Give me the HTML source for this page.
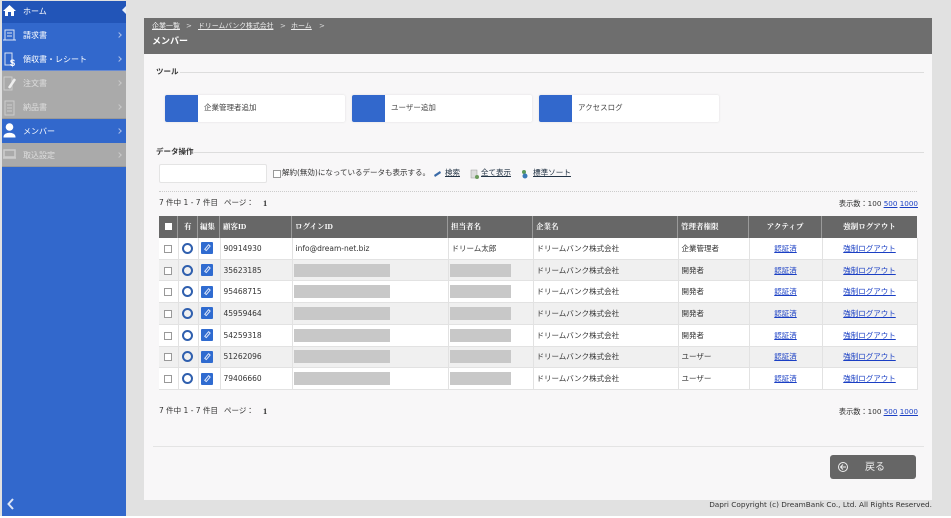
<!DOCTYPE html>
<html lang="ja"><head><meta charset="utf-8">
<style>
html,body{margin:0;padding:0;width:951px;height:518px;overflow:hidden;background:#fff}
body{position:relative;font-family:"DejaVu Sans","Noto Sans CJK JP",sans-serif;font-size:7.5px;color:#333}
.a{position:absolute;white-space:nowrap}
a{color:#1a3fc4}
.side{left:2px;width:124px}
.lbl{left:23px;color:#fff;font-size:8px;line-height:12px;margin-top:1px}
.chev{left:117px;width:3px;height:3px;border-top:1px solid #a9bde6;border-right:1px solid #a9bde6;transform:rotate(45deg)}
.chev.g{border-color:#c8c8c8}
.th{background:#676767;color:#fff;font-family:"Liberation Serif","Noto Serif CJK SC",serif;font-weight:bold;font-size:7.5px;line-height:22px;height:22px;top:216px;box-sizing:border-box;border-right:1px solid #9a9a9a;padding-left:3px}
.btn{background:#fff;height:27px;top:95px;border-radius:2px;box-shadow:0 0 2px #ddd}
.btn i{position:absolute;left:0;top:0;width:33px;height:27px;background:#3268cc;border-radius:2px 0 0 2px}
.btn span{position:absolute;left:39px;top:7px;font-size:7.5px;line-height:12px;color:#444}
.hr{background:#ddd;height:1px}
td{padding:0 0 0 3px;border:1px solid #e2e2e2;border-width:0 1px 1px 0;height:20.7px;white-space:nowrap;overflow:hidden}
tr{background:#fff}tr.o{background:#f0f0f0}
.c{text-align:center;padding:0}
.cb{display:inline-block;width:6px;height:6px;border:1px solid #999;background:#fff;vertical-align:middle}
.r{display:inline-block;width:7px;height:7px;border:2.5px solid #2f5fae;border-radius:50%;vertical-align:middle;background:transparent;margin-right:1px}
.e{display:inline-block;width:12px;height:12px;background:#2f6bd0;border-radius:1px;vertical-align:middle;position:relative;margin-right:4px}
.e:after{content:"";position:absolute;left:5px;top:2px;width:2.5px;height:7px;border:1px solid #dfe8fa;box-sizing:border-box;transform:rotate(40deg)}
td a{color:#1a3fc4}
.m{display:block;height:13px;background:#c8c8c8;margin-left:-2px}
</style></head><body>
<div class="a" style="left:0;top:0;width:951px;height:516px;background:#e1e1e1"></div>
<!-- sidebar -->
<div class="a side" style="top:1px;height:515px;background:#3268cc"></div>
<div class="a side" style="top:1px;height:22px;background:#2255b8"></div>
<div class="a side" style="top:71px;height:48px;background:#aaa"></div>
<div class="a side" style="top:143px;height:24px;background:#aaa"></div>
<div class="a side" style="top:70px;height:1px;background:#6a8cd2"></div>
<div class="a side" style="top:118px;height:1px;background:#999"></div>
<div class="a side" style="top:166px;height:1px;background:#999"></div>
<svg class="a" style="left:0;top:0" width="40" height="518" viewBox="0 0 40 518">
<path d="M3 11L9.500 5L16 11L14 11L14 16L11 16L11 12L8 12L8 16L5 16L5 11Z" fill="#fff"/>
<rect x="5" y="30" width="9" height="10" fill="none" stroke="#dce4f5" stroke-width="1"/><path d="M7 33H12M7 36H12M3 40H16" stroke="#dce4f5" stroke-width="1"/>
<path d="M5 53H12V65H5Z" fill="none" stroke="#dce4f5"/><text x="10" y="66" font-size="9" font-weight="bold" fill="#fff" font-family="Liberation Sans">$</text>
<path d="M4 77H12V90H4Z" fill="none" stroke="#ccc"/><path d="M9 88L15 79" stroke="#eee" stroke-width="2.500"/>
<path d="M5 101H14V115H5Z M7 105H12M7 108H12M7 111H12" fill="none" stroke="#ccc"/>
<circle cx="9.500" cy="127" r="3.800" fill="#fff"/><path d="M4 137C4 132 15 132 15 137Z" fill="#fff" stroke="#fff"/>
<path d="M4 150H15V157H4Z M3 158H16" fill="none" stroke="#ccc" stroke-width="1.500"/>
<path d="M13 499L8.500 504L13 509" fill="none" stroke="#dfe6f5" stroke-width="2"/>
</svg>
<div class="a" style="left:122px;top:6px;width:0;height:0;border:4px solid transparent;border-right:4px solid #e8eef8;border-left:0"></div>
<div class="a lbl" style="top:5px">ホーム</div>
<div class="a lbl" style="top:29px">請求書</div>
<div class="a lbl" style="top:53px">領収書・レシート</div>
<div class="a lbl" style="top:77px;color:#ddd">注文書</div>
<div class="a lbl" style="top:101px;color:#ddd">納品書</div>
<div class="a lbl" style="top:125px">メンバー</div>
<div class="a lbl" style="top:149px;color:#ddd">取込設定</div>
<div class="a chev" style="top:33px"></div><div class="a chev" style="top:57px"></div><div class="a chev g" style="top:81px"></div><div class="a chev g" style="top:105px"></div><div class="a chev" style="top:129px"></div><div class="a chev g" style="top:153px"></div>
<!-- panel -->
<div class="a" style="left:144px;top:18px;width:788px;height:482px;background:#f8f7f8"></div>
<div class="a" style="left:144px;top:18px;width:788px;height:36px;background:#6e6e6e"></div>
<div class="a" style="left:152px;top:20px;color:#eee;font-size:7px;line-height:12px"><u>企業一覧</u></div>
<div class="a" style="left:186px;top:20px;color:#ddd;font-size:7px;line-height:12px">&gt;</div>
<div class="a" style="left:198px;top:20px;color:#eee;font-size:6.85px;line-height:12px"><u>ドリームバンク株式会社</u></div>
<div class="a" style="left:280px;top:20px;color:#ddd;font-size:7px;line-height:12px">&gt;</div>
<div class="a" style="left:291px;top:20px;color:#eee;font-size:7px;line-height:12px"><u>ホーム</u></div>
<div class="a" style="left:319px;top:20px;color:#ddd;font-size:7px;line-height:12px">&gt;</div>
<div class="a" style="left:152px;top:35px;color:#fff;font-size:9px;font-weight:bold;line-height:14px">メンバー</div>
<div class="a" style="left:156px;top:66px;font-size:7.5px;font-weight:bold;line-height:12px;color:#333">ツール</div>
<div class="a hr" style="left:180px;top:72px;width:744px"></div>
<div class="a btn" style="left:165px;width:180px"><i></i><span>企業管理者追加</span></div>
<div class="a btn" style="left:352px;width:180px"><i></i><span>ユーザー追加</span></div>
<div class="a btn" style="left:539px;width:180px"><i></i><span>アクセスログ</span></div>
<div class="a" style="left:156px;top:146px;font-size:7.5px;font-weight:bold;line-height:12px;color:#333">データ操作</div>
<div class="a hr" style="left:194px;top:152px;width:730px"></div>
<div class="a" style="left:159px;top:164px;width:108px;height:19px;background:#fff;border:1px solid #e4e4e4;border-radius:2px;box-sizing:border-box"></div>
<div class="a" style="left:273px;top:170px;width:6px;height:6px;background:#fff;border:1px solid #999"></div>
<div class="a" style="left:282px;top:167px;font-size:7.5px;line-height:12px">解約(無効)になっているデータも表示する。</div>
<svg class="a" style="left:432px;top:168px" width="100" height="12"><path d="M2 7L8 3L9 5L3 9Z" fill="#3a6aa8"/><rect x="39" y="2" width="6" height="8" fill="#ddd" stroke="#999" stroke-width=".5"/><circle cx="45" cy="9" r="2" fill="#6a9a5a"/><circle cx="92" cy="4" r="2" fill="#5a9a5a"/><circle cx="93" cy="8" r="2.500" fill="#3a7ab8"/></svg>
<div class="a" style="left:445px;top:167px;font-size:7.5px;line-height:12px;color:#234"><u>検索</u></div>
<div class="a" style="left:481px;top:167px;font-size:7.5px;line-height:12px;color:#234"><u>全て表示</u></div>
<div class="a" style="left:533px;top:167px;font-size:7.6px;line-height:12px;color:#234"><u>標準ソート</u></div>
<div class="a" style="left:159px;top:191px;width:758px;border-top:1px dotted #ccc"></div>
<div class="a" style="left:159px;top:197px;font-size:7.5px;line-height:12px">7 件中 1 - 7 件目</div>
<div class="a" style="left:224px;top:197px;font-size:7.5px;line-height:12px">ページ：</div>
<div class="a" style="left:263px;top:197px;font:bold 8.5px/12px 'Liberation Serif',serif">1</div>
<div class="a" style="right:33px;top:198px;font-size:7.2px;line-height:12px">表示数：100 <a href="#"><u>500</u></a> <a href="#"><u>1000</u></a></div>
<div class="a" style="left:159px;top:405px;font-size:7.5px;line-height:12px">7 件中 1 - 7 件目</div>
<div class="a" style="left:224px;top:405px;font-size:7.5px;line-height:12px">ページ：</div>
<div class="a" style="left:263px;top:405px;font:bold 8.5px/12px 'Liberation Serif',serif">1</div>
<div class="a" style="right:33px;top:406px;font-size:7.2px;line-height:12px">表示数：100 <a href="#"><u>500</u></a> <a href="#"><u>1000</u></a></div>
<!-- table -->
<div class="a th" style="left:159px;width:19px"></div>
<div class="a" style="left:165px;top:223px;width:7px;height:7px;background:#fff"></div>
<div class="a th" style="left:178px;width:20px;padding-left:6px">有</div>
<div class="a th" style="left:198px;width:22px;padding-left:2px">編集</div>
<div class="a th" style="left:220px;width:72px">顧客ID</div>
<div class="a th" style="left:292px;width:156px">ログインID</div>
<div class="a th" style="left:448px;width:85px">担当者名</div>
<div class="a th" style="left:533px;width:145px">企業名</div>
<div class="a th" style="left:678px;width:71px">管理者権限</div>
<div class="a th" style="left:749px;width:73px;padding:0;text-align:center">アクティブ</div>
<div class="a th" style="left:822px;width:95px;padding:0;text-align:center;border:0">強制ログアウト</div>
<table class="a" style="left:159px;top:238px;width:758px;height:152px;border-collapse:collapse;table-layout:fixed;font-size:7.5px;color:#333">
<colgroup><col style="width:19px"><col style="width:20px"><col style="width:22px"><col style="width:72px"><col style="width:156px"><col style="width:85px"><col style="width:145px"><col style="width:71px"><col style="width:73px"><col style="width:95px"></colgroup>
<tr><td class="c"><span class="cb"></span></td><td class="c"><span class="r"></span></td><td class="c"><span class="e"></span></td><td>90914930</td><td>info@dream-net.biz</td><td>ドリーム太郎</td><td>ドリームバンク株式会社</td><td>企業管理者</td><td class="c"><a href="#">認証済</a></td><td class="c"><a href="#">強制ログアウト</a></td></tr>
<tr class="o"><td class="c"><span class="cb"></span></td><td class="c"><span class="r"></span></td><td class="c"><span class="e"></span></td><td>35623185</td><td><span class="m" style="width:96px"></span></td><td><span class="m" style="width:61px"></span></td><td>ドリームバンク株式会社</td><td>開発者</td><td class="c"><a href="#">認証済</a></td><td class="c"><a href="#">強制ログアウト</a></td></tr>
<tr><td class="c"><span class="cb"></span></td><td class="c"><span class="r"></span></td><td class="c"><span class="e"></span></td><td>95468715</td><td><span class="m" style="width:96px"></span></td><td><span class="m" style="width:61px"></span></td><td>ドリームバンク株式会社</td><td>開発者</td><td class="c"><a href="#">認証済</a></td><td class="c"><a href="#">強制ログアウト</a></td></tr>
<tr class="o"><td class="c"><span class="cb"></span></td><td class="c"><span class="r"></span></td><td class="c"><span class="e"></span></td><td>45959464</td><td><span class="m" style="width:96px"></span></td><td><span class="m" style="width:61px"></span></td><td>ドリームバンク株式会社</td><td>開発者</td><td class="c"><a href="#">認証済</a></td><td class="c"><a href="#">強制ログアウト</a></td></tr>
<tr><td class="c"><span class="cb"></span></td><td class="c"><span class="r"></span></td><td class="c"><span class="e"></span></td><td>54259318</td><td><span class="m" style="width:96px"></span></td><td><span class="m" style="width:61px"></span></td><td>ドリームバンク株式会社</td><td>開発者</td><td class="c"><a href="#">認証済</a></td><td class="c"><a href="#">強制ログアウト</a></td></tr>
<tr class="o"><td class="c"><span class="cb"></span></td><td class="c"><span class="r"></span></td><td class="c"><span class="e"></span></td><td>51262096</td><td><span class="m" style="width:96px"></span></td><td><span class="m" style="width:61px"></span></td><td>ドリームバンク株式会社</td><td>ユーザー</td><td class="c"><a href="#">認証済</a></td><td class="c"><a href="#">強制ログアウト</a></td></tr>
<tr><td class="c"><span class="cb"></span></td><td class="c"><span class="r"></span></td><td class="c"><span class="e"></span></td><td>79406660</td><td><span class="m" style="width:96px"></span></td><td><span class="m" style="width:61px"></span></td><td>ドリームバンク株式会社</td><td>ユーザー</td><td class="c"><a href="#">認証済</a></td><td class="c"><a href="#">強制ログアウト</a></td></tr>
</table>
<div class="a hr" style="left:153px;top:446px;width:771px;background:#e4e4e4"></div>
<div class="a" style="left:830px;top:455px;width:86px;height:24px;background:#666;border-radius:3px"></div>
<svg class="a" style="left:837px;top:461px" width="13" height="13"><circle cx="6" cy="6" r="4.500" fill="none" stroke="#eee"/><path d="M6 3.500L3.500 6L6 8.500M3.500 6H9" fill="none" stroke="#eee"/></svg>
<div class="a" style="left:865px;top:461px;color:#eee;font-size:10px;line-height:14px">戻る</div>
<div class="a" style="right:19px;top:499px;line-height:12px;font-family:'DejaVu Sans',sans-serif;font-size:7.3px;color:#333">Dapri Copyright (c) DreamBank Co., Ltd. All Rights Reserved.</div>
</body></html>
